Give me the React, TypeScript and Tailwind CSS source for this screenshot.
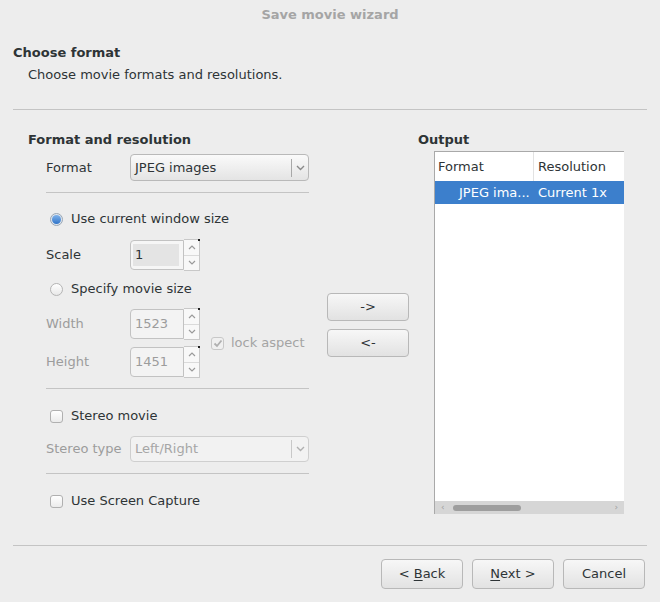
import type { ReactNode } from "react";

const font = "font-['DejaVu_Sans',sans-serif]";

function Sep({ className = "" }: { className?: string }) {
  return <div className={`h-px bg-[#c4c4c4] ${className}`} />;
}

function Chevron({ dim = false }: { dim?: boolean }) {
  return (
    <svg width="9" height="6" viewBox="0 0 9 6" className="shrink-0">
      <path d="M1 1 L4.5 4.5 L8 1" fill="none" stroke={dim ? "#b0b0b0" : "#8a8a8a"} strokeWidth="1.4" />
    </svg>
  );
}

function Combo({ value, disabled = false, h }: { value: string; disabled?: boolean; h: string }) {
  return (
    <div
      className={`flex w-[179px] items-center rounded-[4px] border ${h} ${
        disabled
          ? "border-[#cfcfcf] bg-[#f2f2f2] text-[#a6a6a6]"
          : "border-[#b9b9b9] bg-gradient-to-b from-[#fafafa] to-[#e4e4e4] text-[#2e3436]"
      }`}
    >
      <span className="flex-1 pl-[4px]">{value}</span>
      <div className={`h-[18px] w-px ${disabled ? "bg-[#c8c8c8]" : "bg-[#a8a8a8]"}`} />
      <div className="flex w-[16px] justify-center">
        <Chevron dim={disabled} />
      </div>
    </div>
  );
}

function Spin({ value, disabled = false }: { value: string; disabled?: boolean }) {
  return (
    <div className="flex items-center">
      <div
        className={`flex h-[30px] w-[54px] items-center rounded-l-[4px] border border-[#c2c2c2] pl-[4px] ${
          disabled ? "bg-[#f3f3f3] text-[#9c9c9c]" : "bg-[#f6f6f6] text-[#2e3436]"
        }`}
      >
        {disabled ? (
          value
        ) : (
          <div className="-ml-[2px] flex h-[22px] w-[46px] items-center bg-[#e4e4e4] pl-[2px]">{value}</div>
        )}
      </div>
      <div className="relative flex h-[32px] w-[16px] flex-col border border-l-0 border-[#c8c8c8] bg-[#f8f8f8]">
        <div className="absolute -right-px -top-px h-[2px] w-[2px] bg-[#222]" />
        <div className="flex flex-1 items-center justify-center border-b border-[#dadada]">
          <svg width="8" height="5" viewBox="0 0 8 5">
            <path d="M1 4 L4 1 L7 4" fill="none" stroke="#9a9a9a" strokeWidth="1.2" />
          </svg>
        </div>
        <div className="flex flex-1 items-center justify-center">
          <svg width="8" height="5" viewBox="0 0 8 5">
            <path d="M1 1 L4 4 L7 1" fill="none" stroke="#9a9a9a" strokeWidth="1.2" />
          </svg>
        </div>
      </div>
    </div>
  );
}

function Radio({ on = false }: { on?: boolean }) {
  return on ? (
    <div className="flex h-[13px] w-[13px] items-center justify-center rounded-full border border-[#9aa6b4] bg-[#dfe6ee]">
      <div className="h-[9px] w-[9px] rounded-full bg-gradient-to-b from-[#7fb2ea] to-[#2f74c8]" />
    </div>
  ) : (
    <div className="h-[13px] w-[13px] rounded-full border border-[#b4b4b4] bg-gradient-to-b from-[#ffffff] to-[#e8e8e8]" />
  );
}

function Check({ on = false, disabled = false }: { on?: boolean; disabled?: boolean }) {
  return (
    <div
      className={`flex h-[13px] w-[13px] items-center justify-center rounded-[3px] border ${
        disabled ? "border-[#c8c8c8] bg-[#f0f0f0]" : "border-[#b0b0b0] bg-gradient-to-b from-[#ffffff] to-[#ebebeb]"
      }`}
    >
      {on && (
        <svg width="10" height="9" viewBox="0 0 10 9">
          <path d="M1.5 4.5 L4 7 L8.5 1.5" fill="none" stroke="#b0b0b0" strokeWidth="1.8" />
        </svg>
      )}
    </div>
  );
}

function Button({ children, className = "" }: { children: ReactNode; className?: string }) {
  return (
    <div
      className={`flex w-[82px] items-center justify-center rounded-[4px] border border-[#b8b8b8] bg-gradient-to-b from-[#f7f7f7] to-[#e2e2e2] text-[#2e3436] ${className}`}
    >
      {children}
    </div>
  );
}

export default function App() {
  return (
    <div className={`h-[602px] w-[660px] overflow-hidden bg-[#ededed] text-[13px] leading-[16px] text-[#2e3436] ${font}`}>
      <div className="flex h-[29px] items-center justify-center font-bold text-[#a5a5a5]">Save movie wizard</div>

      <div className="pl-[13px] pt-[16px]">
        <div className="font-bold">Choose format</div>
        <div className="mt-[6px] pl-[15px]">Choose movie formats and resolutions.</div>
      </div>
      <Sep className="mx-[13px] mt-[26px]" />

      <div className="flex">
        {/* left column */}
        <div className="ml-[28px] mt-[22px] w-[281px]">
          <div className="font-bold">Format and resolution</div>
          <div className="ml-[18px] mt-[6px]">
            <div className="flex items-center">
              <span className="w-[84px]">Format</span>
              <Combo value="JPEG images" h="h-[27px]" />
            </div>
            <Sep className="mt-[11px]" />
            <div className="mt-[18px] flex items-center gap-[8px] pl-[4px]">
              <Radio on />
              <span>Use current window size</span>
            </div>
            <div className="mt-[12px] flex items-center">
              <span className="w-[84px]">Scale</span>
              <Spin value="1" />
            </div>
            <div className="mt-[10px] flex items-center gap-[8px] pl-[4px]">
              <Radio />
              <span>Specify movie size</span>
            </div>
            <div className="mt-[11px] flex items-center">
              <div className="flex flex-col gap-[6px]">
                <div className="flex items-center text-[#9c9c9c]">
                  <span className="w-[84px]">Width</span>
                  <Spin value="1523" disabled />
                </div>
                <div className="flex items-center text-[#9c9c9c]">
                  <span className="w-[84px]">Height</span>
                  <Spin value="1451" disabled />
                </div>
              </div>
              <div className="ml-[11px] flex items-center gap-[7px] text-[#a4a4a4]">
                <Check on disabled />
                <span>lock aspect</span>
              </div>
            </div>
            <Sep className="mt-[10px]" />
            <div className="mt-[19px] flex items-center gap-[8px] pl-[4px]">
              <Check />
              <span>Stereo movie</span>
            </div>
            <div className="mt-[12px] flex items-center">
              <span className="w-[84px] text-[#9c9c9c]">Stereo type</span>
              <Combo value="Left/Right" disabled h="h-[26px]" />
            </div>
            <Sep className="mt-[11px]" />
            <div className="mt-[19px] flex items-center gap-[8px] pl-[4px]">
              <Check />
              <span>Use Screen Capture</span>
            </div>
          </div>
        </div>

        {/* middle buttons */}
        <div className="ml-[18px] mt-[183px] flex flex-col gap-[8px]">
          <Button className="h-[28px]">-&gt;</Button>
          <Button className="h-[28px]">&lt;-</Button>
        </div>

        {/* output */}
        <div className="ml-[9px] mt-[22px]">
          <div className="font-bold">Output</div>
          <div className="ml-[16px] mt-[3px] flex h-[363px] w-[190px] flex-col border-l border-t border-[#a9a9a9] bg-white">
            <div className="flex h-[29px] items-center">
              <span className="w-[99px] border-r border-[#e2e2e2] pl-[3px] leading-[29px]">Format</span>
              <span className="pl-[4px]">Resolution</span>
            </div>
            <div className="flex h-[23px] items-center bg-[#3c7fcc] text-white">
              <span className="w-[99px] pl-[24px]">JPEG ima...</span>
              <span className="pl-[4px]">Current 1x</span>
            </div>
            <div className="flex-1" />
            <div className="flex h-[13px] items-center bg-[#d6d6d6] px-[6px]">
              <span className="text-[9px] leading-none text-[#a0a0a0]">‹</span>
              <div className="ml-[8px] h-[6px] w-[68px] rounded-full bg-[#9e9e9e]" />
              <div className="flex-1" />
              <span className="text-[9px] leading-none text-[#a0a0a0]">›</span>
            </div>
          </div>
        </div>
      </div>

      <Sep className="mx-[13px] mt-[31px]" />
      <div className="mr-[15px] mt-[13px] flex justify-end gap-[9px]">
        <Button className="h-[30px]">
          &lt;&nbsp;<span className="underline underline-offset-2">B</span>ack
        </Button>
        <Button className="h-[30px]">
          <span className="underline underline-offset-2">N</span>ext &gt;
        </Button>
        <Button className="h-[30px]">Cancel</Button>
      </div>
    </div>
  );
}
